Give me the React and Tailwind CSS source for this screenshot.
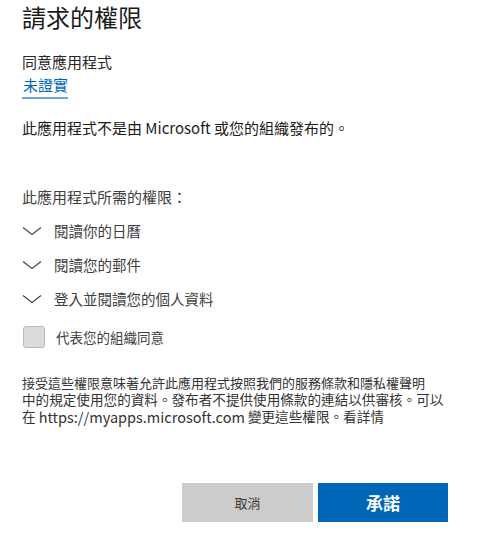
import React from "react";

const Chevron = () => (
  <svg width="20" height="10" viewBox="0 0 20 10" className="shrink-0">
    <polyline points="1,1.5 10,8.5 19,1.5" fill="none" stroke="#4a4a4a" strokeWidth="1.3" />
  </svg>
);

const permissions = ["閱讀你的日曆", "閱讀您的郵件", "登入並閱讀您的個人資料"];

const App = () => {
  return (
    <div
      className="w-[480px] h-[535px] bg-white overflow-hidden pl-[22px] pt-[5px] text-[#1b1b1b]"
      style={{ fontFamily: '"Noto Sans CJK TC", "Noto Sans", sans-serif' }}
    >
      <h1 className="text-[24px] leading-[24px] font-normal">請求的權限</h1>

      <div className="mt-[23px] text-[15px] leading-[20px] text-[#262626]">同意應用程式</div>
      <div>
        <span className="inline-block text-[15px] leading-[20px] pb-[2px] text-[#0067b8] border-b-2 border-[#6aa6dc] pl-[1px]">
          未證實
        </span>
      </div>

      <p className="mt-[19px] text-[15px] leading-[20px]">
        此應用程式不是由 Microsoft 或您的組織發布的。
      </p>

      <p className="mt-[49px] text-[15px] leading-[20px] text-[#404040]">此應用程式所需的權限：</p>

      {/* 權限清單 */}
      <ul className="mt-[7px]">
        {permissions.map((p) => (
          <li key={p} className="flex items-center h-[34px] gap-[12px]">
            <Chevron />
            <span className="text-[14.5px] text-[#404040]">{p}</span>
          </li>
        ))}
      </ul>

      <label className="mt-[4px] flex items-center h-[34px]">
        <span className="ml-[1px] w-[22px] h-[22px] rounded-[3px] bg-[#dcdcdc] border border-[#b9b9b9]" />
        <span className="ml-[11px] text-[13.5px] text-[#404040]">代表您的組織同意</span>
      </label>

      <div className="mt-[21px] text-[#333333] whitespace-nowrap">
        <div className="h-[16px] flex items-center text-[13px] leading-[16px]">
          接受這些權限意味著允許此應用程式按照我們的服務條款和隱私權聲明
        </div>
        <div className="h-[17px] flex items-center text-[13.6px] leading-[17px]">
          中的規定使用您的資料。發布者不提供使用條款的連結以供審核。可以
        </div>
        <div className="h-[17px] flex items-center text-[13.6px] leading-[17px]">
          在&nbsp;<span className="text-[14.5px]">https://myapps.microsoft.com</span>&nbsp;變更這些權限。看詳情
        </div>
      </div>

      <div className="mt-[58px] flex justify-end gap-[5px] pr-[32px]">
        <button className="w-[131px] h-[39px] bg-[#cccccc] text-[13px] text-[#3a3a3a]">取消</button>
        <button className="w-[130px] h-[39px] bg-[#0067b8] text-[17px] font-bold text-white">承諾</button>
      </div>
    </div>
  );
};

export default App;
